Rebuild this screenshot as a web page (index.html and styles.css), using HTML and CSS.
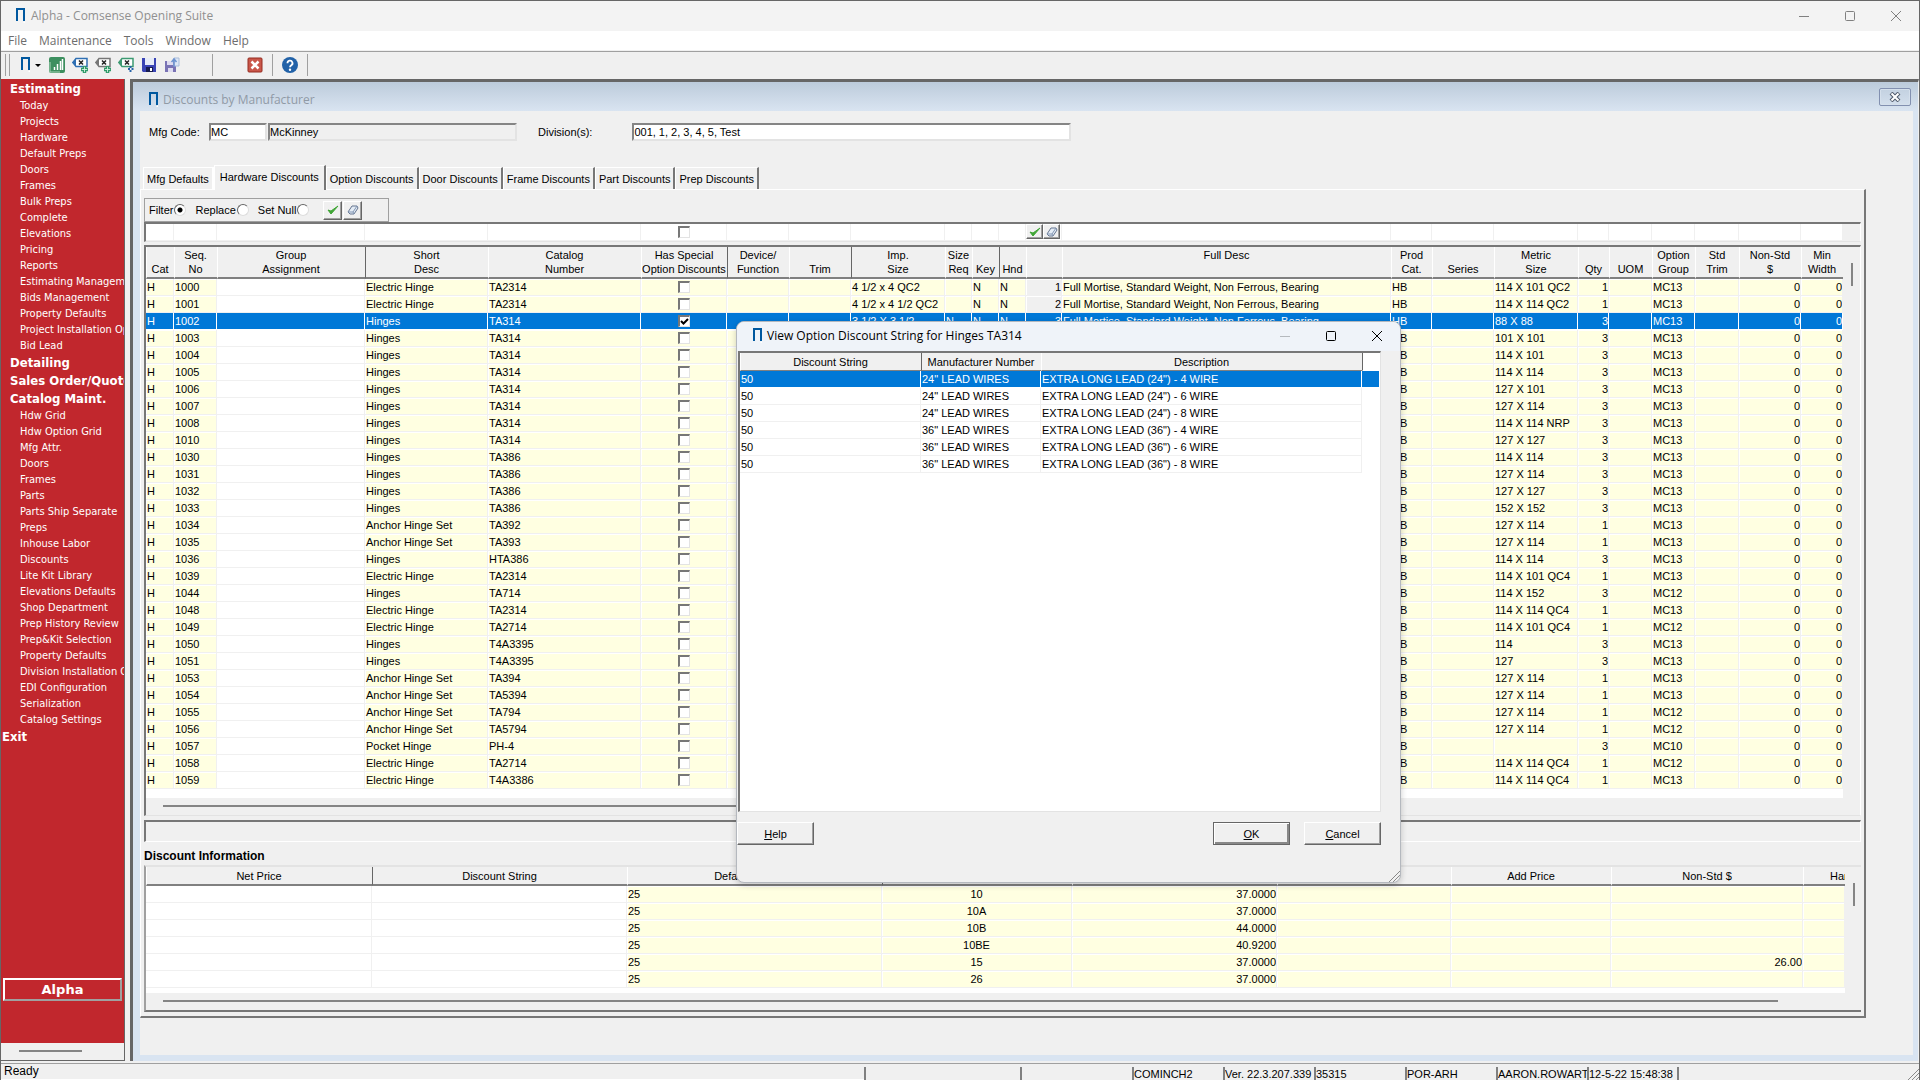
FILE: index.html
```html
<!DOCTYPE html>
<html lang="en">
<head>
<meta charset="utf-8">
<title>Alpha - Comsense Opening Suite</title>
<link rel="stylesheet" href="styles.css">
</head>
<body>
<svg class="defs" aria-hidden="true">
  <symbol id="door" viewBox="0 0 14 16"><path d="M0 15h9l2-2v2H2z" fill="#fff"/><path d="M3 13V1h7v12" fill="none" stroke="#00589f" stroke-width="2"/><path d="M2 0h9" stroke="#00589f" stroke-width="2"/></symbol>
  <symbol id="check" viewBox="0 0 12 12"><path d="M1 6l3 4 7-8-7 5z" fill="#3fa535" stroke="#3fa535"/></symbol>
  <symbol id="eraser" viewBox="0 0 12 12"><path d="M1 8l4-6h5l1 2-4 6H3z" fill="#e4ecf5" stroke="#64748f"/><path d="M1 8h5l4-6M6 8l1 2" fill="none" stroke="#8296b4"/></symbol>
  <symbol id="plus" viewBox="0 0 8 8"><path d="M4 0v8M0 4h8" stroke="#2f9a68" stroke-width="4"/><path d="M4 1v6M1 4h6" stroke="#d8f3e5" stroke-width="1"/></symbol>
  <symbol id="x" viewBox="0 0 12 12"><path d="M1 1l10 10M11 1L1 11" stroke="currentColor"/></symbol>
</svg>

<div class="app">
  <header class="titlebar">
    <svg class="door"><use href="#door"/></svg>
    <h1>Alpha - Comsense Opening Suite</h1>
    <div class="winctl">
      <button aria-label="Minimize"><svg width="12" height="12"><path d="M1 6.500h10" stroke="currentColor"/></svg></button>
      <button aria-label="Maximize"><svg width="12" height="12"><rect x="1.500" y="1.500" width="9" height="9" rx="1" fill="none" stroke="currentColor"/></svg></button>
      <button aria-label="Close"><svg width="12" height="12"><use href="#x"/></svg></button>
    </div>
  </header>
  <nav class="menubar"><a href="#">File</a><a href="#">Maintenance</a><a href="#">Tools</a><a href="#">Window</a><a href="#">Help</a></nav>
  <div class="toolbar">
    <span class="grip"></span>
    <button class="tool modules" aria-label="Modules"><svg class="door"><use href="#door"/></svg><i class="caret"></i></button>
    <button class="tool" aria-label="Reports"><svg viewBox="0 0 16 16"><rect width="16" height="16" rx="2" fill="#3d8f5f"/><path d="M1 5v10h10" fill="none" stroke="#a9d3b8"/><path d="M5.500 13v-3M8.500 13V7M11.500 13V4M13.500 13V2" stroke="#fff" stroke-width="1.500"/></svg></button>
    <button class="tool" aria-label="Add tag"><svg viewBox="0 0 16 16"><path d="M4 1.500h11v8H4l-3-4z" fill="#fff" stroke="#2f6fb3" stroke-width="1.500"/><path d="M0 5.500l4-4v8z" fill="#2f6fb3"/><path d="M7 3.500l4 4M11 3.500l-4 4" stroke="#222" stroke-width="1.500"/><use href="#plus" x="9" y="9" width="7" height="7"/></svg></button>
    <button class="tool" aria-label="Add item"><svg viewBox="0 0 16 16"><path d="M4 1.500h11v8H4l-3-4z" fill="#fff" stroke="#777" stroke-width="1.500"/><path d="M0 5.500l4-4v8z" fill="#777"/><path d="M7 3.500l4 4M11 3.500l-4 4" stroke="#222" stroke-width="1.500"/><use href="#plus" x="9" y="9" width="7" height="7"/></svg></button>
    <button class="tool" aria-label="Move tag"><svg viewBox="0 0 16 16"><path d="M4 1.500h11v8H4l-3-4z" fill="#fff" stroke="#3d9a72" stroke-width="1.500"/><path d="M0 5.500l4-4v8z" fill="#3d9a72"/><path d="M7 3.500l4 4M11 3.500l-4 4" stroke="#222" stroke-width="1.500"/><path d="M12.500 9v2M12.500 13v2M10 12h2M13.500 12h2" stroke="#2864a8" stroke-width="2"/></svg></button>
    <button class="tool" aria-label="Save"><svg viewBox="0 0 16 16"><path d="M1 1h14v14H2l-1-1z" fill="#3a44b4"/><path d="M4 1h9v7H4z" fill="#e6ebf8"/><path d="M5 10h7v5H5z" fill="#171c50"/><path d="M9 11h2v3H9z" fill="#fff"/></svg></button>
    <button class="tool" aria-label="Save and send"><svg viewBox="0 0 16 16"><path d="M1 4h11v11H1z" fill="#7a73b5"/><path d="M3 4h6v4H3zM4 11h5v4H4z" fill="#dedcf0"/><path d="M10 1h5v8h-5z" fill="#dce6f5" stroke="#a9bcda"/><path d="M10 10V3M7.500 5L10 2l2.500 3" fill="none" stroke="#6d93d0" stroke-width="1.500"/></svg></button>
    <span class="sep wide"></span>
    <button class="tool" aria-label="Close window"><svg viewBox="0 0 16 16"><rect x="1" y="1" width="14" height="14" rx="1" fill="#c9574a" stroke="#962c20"/><path d="M4.500 4.500l7 7M11.500 4.500l-7 7" stroke="#fff" stroke-width="2.500"/></svg></button>
    <span class="sep"></span>
    <button class="tool" aria-label="Help"><svg viewBox="0 0 16 16"><circle cx="8" cy="8" r="8" fill="#2262a8"/><path d="M5.500 6.300a2.500 2.500 0 1 1 3.800 2C8.300 9 8 9.300 8 10.300" fill="none" stroke="#fff" stroke-width="1.800"/><circle cx="8" cy="12.700" r="1.200" fill="#fff"/></svg></button>
    <span class="sep"></span>
  </div>

  <div class="workspace">
    <aside class="sidebar">
      <nav>
        <h2>Estimating</h2>
        <a href="#">Today</a><a href="#">Projects</a><a href="#">Hardware</a><a href="#">Default Preps</a><a href="#">Doors</a><a href="#">Frames</a><a href="#">Bulk Preps</a><a href="#">Complete</a><a href="#">Elevations</a><a href="#">Pricing</a><a href="#">Reports</a><a href="#">Estimating Management</a><a href="#">Bids Management</a><a href="#">Property Defaults</a><a href="#">Project Installation Options</a><a href="#">Bid Lead</a>
        <h2>Detailing</h2>
        <h2>Sales Order/Quote</h2>
        <h2>Catalog Maint.</h2>
        <a href="#">Hdw Grid</a><a href="#">Hdw Option Grid</a><a href="#">Mfg Attr.</a><a href="#">Doors</a><a href="#">Frames</a><a href="#">Parts</a><a href="#">Parts Ship Separate</a><a href="#">Preps</a><a href="#">Inhouse Labor</a><a href="#">Discounts</a><a href="#">Lite Kit Library</a><a href="#">Elevations Defaults</a><a href="#">Shop Department</a><a href="#">Prep History Review</a><a href="#">Prep&amp;Kit Selection</a><a href="#">Property Defaults</a><a href="#">Division Installation Options</a><a href="#">EDI Configuration</a><a href="#">Serialization</a><a href="#">Catalog Settings</a>
        <h2 class="exit">Exit</h2>
      </nav>
      <button class="company">Alpha</button>
      <div class="hscroll"><span></span></div>
    </aside>

    <main class="child">
      <div class="childbar">
        <svg class="door"><use href="#door"/></svg>
        <h2>Discounts by Manufacturer</h2>
        <button aria-label="Close"><svg width="12" height="10" viewBox="0 0 12 10"><path d="M2 1l8 8M10 1L2 9" stroke="#4f5a6b" stroke-width="4"/><path d="M2.500 1.500l7 7M9.500 1.500l-7 7" stroke="#fff" stroke-width="2"/></svg></button>
      </div>
      <div class="content">
        <form class="fields">
          <label for="mfg">Mfg Code:</label>
          <input id="mfg" class="mfg" value="MC">
          <input class="mfgname" aria-label="Manufacturer name" value="McKinney" readonly>
          <label for="div">Division(s):</label>
          <input id="div" class="division" value="001, 1, 2, 3, 4, 5, Test">
        </form>
        <div class="tabs">
          <button>Mfg Defaults</button><button class="active">Hardware Discounts</button><button>Option Discounts</button><button>Door Discounts</button><button>Frame Discounts</button><button>Part Discounts</button><button>Prep Discounts</button>
        </div>
        <section class="panel">
          <div class="mode">
            <label>Filter<input type="radio" name="mode" checked></label>
            <label>Replace<input type="radio" name="mode"></label>
            <label>Set Null<input type="radio" name="mode"></label>
            <button aria-label="Apply"><svg><use href="#check"/></svg></button>
            <button aria-label="Clear"><svg><use href="#eraser"/></svg></button>
          </div>
          <div class="filterrow"><table class="grid main" id="filter"></table></div>
          <div class="gridbox">
            <div class="gridbody">
              <table class="grid main" id="hardware">
                <thead><tr>
                  <th>Cat</th><th>Seq.<br>No</th><th>Group<br>Assignment</th><th class="dark">Short<br>Desc</th><th>Catalog<br>Number</th><th>Has Special<br>Option Discounts</th><th class="dark">Device/<br>Function</th><th>Trim</th><th class="dark">Imp.<br>Size</th><th>Size<br>Req</th><th>Key</th><th class="dark">Hnd</th><th></th><th class="top">Full Desc</th><th>Prod<br>Cat.</th><th>Series</th><th>Metric<br>Size</th><th>Qty</th><th>UOM</th><th>Option<br>Group</th><th>Std<br>Trim</th><th>Non-Std<br>$</th><th>Min<br>Width</th>
                </tr></thead>
              </table>
              <div class="vscroll"><span></span></div>
            </div>
            <div class="hscroll short"><span></span></div>
          </div>
          <div class="message"></div>
          <h3>Discount Information</h3>
          <div class="gridbox info">
            <div class="gridbody">
              <table class="grid" id="discounts">
                <colgroup><col style="width:226px"><col style="width:255px"><col style="width:255px"><col style="width:190px"><col style="width:205px"><col><col style="width:160px"><col style="width:192px"><col style="width:42px"></colgroup>
                <thead><tr><th>Net Price</th><th class="dark">Discount String</th><th>Default Discount</th><th class="dark"></th><th></th><th></th><th>Add Price</th><th>Non-Std $</th><th class="cut">Hardware</th></tr></thead>
              </table>
              <div class="vscroll"><span></span></div>
            </div>
            <div class="hscroll"><span></span></div>
          </div>
        </section>
      </div>
    </main>
  </div>

  <footer class="status">
    <span class="ready">Ready</span>
    <span class="cell w1"></span><span class="cell w2"></span><span class="cell">COMINCH2</span><span class="cell">Ver. 22.3.207.339</span><span class="cell">35315</span><span class="cell">POR-ARH</span><span class="cell">AARON.ROWART</span><span class="cell last">12-5-22 15:48:38</span>
    <svg class="sizegrip" viewBox="0 0 12 12"><path d="M1 12L12 1M5 12l7-7M9 12l3-3" stroke="#888"/></svg>
  </footer>

  <div class="dialog" role="dialog" aria-labelledby="dlgtitle">
    <div class="dlgbar">
      <svg class="door"><use href="#door"/></svg>
      <h2 id="dlgtitle">View Option Discount String for Hinges TA314</h2>
      <div class="winctl">
        <button aria-label="Minimize" disabled><svg width="12" height="12"><path d="M1 6.500h10" stroke="currentColor"/></svg></button>
        <button aria-label="Maximize"><svg width="12" height="12"><rect x="1.500" y="1.500" width="9" height="9" rx="1" fill="none" stroke="currentColor"/></svg></button>
        <button aria-label="Close"><svg width="12" height="12"><use href="#x"/></svg></button>
      </div>
    </div>
    <div class="dlggrid">
      <table class="grid plain">
        <colgroup><col style="width:181px"><col style="width:120px"><col><col style="width:18px"></colgroup>
        <thead><tr><th>Discount String</th><th class="dark">Manufacturer Number</th><th>Description</th><th class="dark blank"></th></tr></thead>
        <tbody>
          <tr class="sel"><td>50</td><td>24" LEAD WIRES</td><td>EXTRA LONG LEAD (24") - 4 WIRE</td><td></td></tr>
          <tr><td>50</td><td>24" LEAD WIRES</td><td>EXTRA LONG LEAD (24") - 6 WIRE</td><td></td></tr>
          <tr><td>50</td><td>24" LEAD WIRES</td><td>EXTRA LONG LEAD (24") - 8 WIRE</td><td></td></tr>
          <tr><td>50</td><td>36" LEAD WIRES</td><td>EXTRA LONG LEAD (36") - 4 WIRE</td><td></td></tr>
          <tr><td>50</td><td>36" LEAD WIRES</td><td>EXTRA LONG LEAD (36") - 6 WIRE</td><td></td></tr>
          <tr><td>50</td><td>36" LEAD WIRES</td><td>EXTRA LONG LEAD (36") - 8 WIRE</td><td></td></tr>
        </tbody>
      </table>
    </div>
    <div class="dlgbuttons">
      <button><u>H</u>elp</button><button class="default"><u>O</u>K</button><button><u>C</u>ancel</button>
    </div>
    <svg class="sizegrip" viewBox="0 0 12 12"><path d="M1 12L12 1M5 12l7-7M9 12l3-3" stroke="#888"/></svg>
  </div>
</div>
<script src="app.js"></script>
</body>
</html>
```
FILE: styles.css
```css
* { box-sizing: border-box; }
body { margin: 0; background: #f0f0f0; color: #000; font: 11px/14px "Liberation Sans", Arial, sans-serif; }
h1, h2, h3 { margin: 0; font-size: inherit; font-weight: normal; }
button { margin: 0; padding: 0; border: 0; background: none; font: inherit; color: inherit; }
a { color: inherit; text-decoration: none; }
input { font: inherit; color: inherit; margin: 0; border-radius: 0; }
.defs { display: none; }
.door { width: 14px; height: 16px; flex: none; }

.app { position: relative; display: flex; flex-direction: column; min-height: 100vh; border: 1px solid #666; border-bottom: 0; overflow: hidden; }

/* Frame, menu and toolbar */
.titlebar { display: flex; align-items: center; height: 30px; padding-left: 13px; gap: 3px; background: #f3f3f3; color: #909090; font: 12px/16px "Open Sans", sans-serif; }
.winctl { display: flex; gap: 34px; margin-left: auto; padding-right: 17px; }
.winctl button { display: flex; width: 12px; }
.titlebar .winctl { color: #808080; }
.menubar { display: flex; gap: 12px; height: 20px; padding-left: 7px; background: #fff; border-bottom: 1px solid #f0f0f0; color: #6d6d6d; font: 12px/19px "Open Sans", sans-serif; }
.toolbar { display: flex; align-items: center; height: 28px; padding: 0 0 1px 4px; border-top: 1px solid #a0a0a0; }
.grip { width: 5px; height: 22px; border: solid #a0a0a0; border-width: 0 1px 0 1px; margin-right: 9px; }
.tool { display: flex; width: 16px; height: 16px; margin-right: 7px; }
.tool svg { width: 16px; height: 16px; }
.modules { width: 23px; align-items: center; gap: 2px; }
.modules .door { width: 14px; }
.caret { border: solid transparent; border-width: 3px 3px 0; border-top-color: #000; }
.sep { width: 1px; height: 22px; margin: 0 9px 0 2px; background: #a0a0a0; }
.sep.wide { margin: 0 34px 0 25px; }

/* Navigation column */
.workspace { flex: 1; display: flex; gap: 5px; }
.sidebar { display: flex; flex-direction: column; flex: none; width: 124px; padding: 1px 0 0 1px; background: #c1272d; border-right: 1px solid #666; border-bottom: 1px solid #666; color: #fff; font: 11px/16px "DejaVu Sans Condensed", Tahoma, sans-serif; overflow: hidden; }
.sidebar nav { display: flex; flex-direction: column; white-space: nowrap; }
.sidebar nav a { padding-left: 18px; }
.sidebar nav h2 { padding-left: 8px; font-size: 13px; font-weight: bold; line-height: 18px; }
.sidebar nav .exit { padding-left: 0; }
.company { height: 23px; margin: auto 2px 42px 1px; border: 2px solid; border-color: #fff #a0a0a0 #a0a0a0 #fff; font: bold 13px/18px "DejaVu Sans", Verdana, sans-serif; }
.hscroll { height: 17px; padding-top: 7px; background: #f0f0f0; }
.hscroll span { display: block; height: 2px; background: #858585; }
.sidebar .hscroll { margin-left: -1px; }
.sidebar .hscroll span { width: 63px; margin-left: 18px; }

/* Child window */
.child { flex: 1; display: flex; flex-direction: column; min-width: 0; padding: 0 5px 6px 7px; border: solid #666; border-width: 3px 1px 0 3px; border-right-color: #f0f0f0; background: #d9e4f1; }
.childbar { display: flex; align-items: center; gap: 2px; height: 29px; margin: 0 -5px 0 -7px; padding: 6px 7px 0 14px; background: linear-gradient(#bccbdb, #d9e4f1); color: #909aa6; font: 12px/16px "Open Sans", sans-serif; }
.childbar button { display: grid; place-items: center; align-self: flex-start; width: 32px; height: 18px; margin-left: auto; border: 1px solid #8290b0; border-radius: 2px; box-shadow: inset 0 0 0 1px #d5e0ec; }
.content { flex: 1; padding: 12px 47px 30px 0; background: #f0f0f0; }
.fields { display: flex; align-items: center; height: 18px; padding-left: 9px; }
.fields input { height: 18px; padding: 0; border: 2px solid; border-color: #858585 #e3e3e3 #e3e3e3 #858585; background: #fff; }
.fields label:first-child { width: 60px; }
.fields .mfg { width: 58px; margin-right: 1px; }
.fields .mfgname { width: 249px; margin-right: 21px; background: #f0f0f0; }
.fields .division { width: 439px; margin-left: 40px; }
.tabs { display: flex; align-items: flex-end; height: 24px; margin: 24px 0 0 3px; }
.tabs button { height: 22px; padding: 0 3px; border: solid; border-width: 1px 2px 0 1px; border-color: #fff #777 #fff #fff; white-space: nowrap; }
.tabs button:first-child { border-right-color: #fff; }
.tabs .active { position: relative; height: 25px; padding: 0 5px 3px; margin-bottom: -1px; background: #f0f0f0; }
.panel { padding: 8px 3px 4px 3px; border: solid; border-width: 1px 2px 2px 1px; border-color: #fff #777 #777 #fff; }
.mode { display: flex; align-items: center; width: 245px; height: 24px; padding-left: 4px; border: 1px solid #a0a0a0; }
.mode label { display: flex; align-items: center; gap: 1px; margin-right: 9px; white-space: nowrap; }
.mode input { appearance: none; width: 12px; height: 12px; border: 1px solid; border-color: #666 #ddd #ddd #666; border-radius: 50%; background: #fff; }
.mode input:checked { background: radial-gradient(circle, #000 2px, #fff 3px); }
.mode label:nth-child(3) { margin-right: 14px; }
.mode button, .cellbtn { display: grid; place-items: center; width: 19px; height: 19px; margin-right: 1px; border: 1px solid; border-color: #fff #666 #666 #fff; box-shadow: inset -1px -1px #a0a0a0; background: #f0f0f0; }
.mode svg, .cellbtn svg { width: 12px; height: 12px; }
.filterrow { padding-right: 17px; border: solid; border-width: 2px 1px 1px 2px; border-color: #777 #fff #e3e3e3 #777; }

/* Data grids */
.grid { width: 100%; table-layout: fixed; border-collapse: separate; border-spacing: 0; background: #fff; }
.grid th { height: 17px; padding: 0 1px 0 0; border-bottom: 2px solid #808080; border-left: 1px solid #fff; background: #f0f0f0; font-weight: normal; vertical-align: bottom; white-space: nowrap; line-height: 14px; overflow: hidden; }
.grid th.dark { border-left-color: #666; }
.grid th.top { vertical-align: top; padding-top: 1px; }
.grid th.cut { padding-left: 26px; text-align: left; }
.grid td { height: 17px; padding: 0 1px; border: solid #f0f0f0; border-width: 0 1px 1px 0; background: #ffffe1; box-shadow: inset 1px 1px #fff; line-height: 16px; white-space: nowrap; overflow: hidden; }
.grid td.w, .plain td, #filter td { background: #fff; }
.grid td.n { background: #f0f0f0; text-align: right; padding: 0; }
.grid td.r { text-align: right; padding: 0; }
.grid td.c { text-align: center; }
.grid .sel td { background: #0078d7; color: #fff; box-shadow: none; border-bottom-color: #fff; border-right-color: #fff; }
.main td { padding: 0 1px; }
#hardware th { height: 32px; padding-bottom: 1px; }
#hardware tbody td { line-height: 15px; }
#filter td { padding: 0; }
.cellbtn { display: inline-grid; width: 17px; height: 15px; margin: 0; vertical-align: top; }
td input[type=checkbox] { appearance: none; display: block; width: 12px; height: 12px; margin: 0 auto; border: solid; border-width: 2px 1px 1px 2px; border-color: #777 #e3e3e3 #e3e3e3 #777; background: #fff; }
td input[type=checkbox]:checked { background: #fff url("data:image/svg+xml,%3Csvg xmlns='http://www.w3.org/2000/svg' viewBox='0 0 9 9'%3E%3Cpath d='M1 4l2.500 2.500L8 2' fill='none' stroke='%23000' stroke-width='2'/%3E%3C/svg%3E"); }
.gridbox { margin-top: 3px; border: solid; border-width: 2px 1px 1px 2px; border-color: #777 #fff #e3e3e3 #777; }
.gridbody { display: flex; align-items: flex-start; padding-bottom: 9px; background: linear-gradient(to left, #f0f0f0 17px, #fff 17px); }
.vscroll { flex: none; align-self: stretch; width: 17px; padding: 16px 7px 0 8px; }
.vscroll span { display: block; width: 2px; height: 23px; background: #858585; }
.gridbox > .hscroll span { margin: 0 83px 0 17px; }
.gridbox > .short span { margin-right: 600px; }
.message { height: 22px; margin-top: 4px; border: solid; border-width: 2px 1px 1px 2px; border-color: #777 #fff #fff #777; }
.panel h3 { padding: 7px 0 1px; font-size: 12px; line-height: 15px; font-weight: bold; }
.info { margin: 0; border-width: 2px 0 2px 2px; border-color: #e3e3e3 #fff #777 #a0a0a0; }
.info th { height: 19px; padding-bottom: 1px; }
.info .gridbody { padding-bottom: 5px; background: linear-gradient(to left, #f0f0f0 16px, #fff 16px); }
.info .vscroll { width: 16px; padding-right: 6px; }

/* Status bar */
.status { display: flex; align-items: flex-end; height: 17px; margin-top: 2px; padding-right: 2px; border-top: 1px solid #a0a0a0; white-space: nowrap; }
.status .ready { flex: 1; align-self: flex-start; padding-left: 3px; font-size: 12px; line-height: 15px; border-bottom: 1px solid #fff; }
.status .cell { flex: none; width: 91px; height: 13px; border-left: 2px solid #808080; overflow: hidden; line-height: 15px; }
.status .w1 { width: 156px; }
.status .w2 { width: 112px; }
.status .last { width: 92px; border-right: 2px solid #808080; margin-right: 238px; }
.sizegrip { position: absolute; right: 0; bottom: 0; width: 12px; height: 12px; }

/* Dialog window */
.dialog { position: absolute; left: 735px; top: 320px; width: 665px; border: 1px solid #b4b8be; border-radius: 8px; background: #f0f0f0; overflow: hidden; box-shadow: 0 2px 6px rgba(0, 0, 0, .2); }
.dlgbar { display: flex; align-items: center; gap: 2px; height: 29px; padding: 0 0 2px 14px; background: #eff3f9; font: 12px/16px "Open Sans", sans-serif; }
.dlgbar button:disabled { color: #b5b9be; }
.dlggrid { height: 461px; margin: 0 19px 0 1px; border: solid; border-width: 2px 1px 1px 2px; border-color: #777 #e3e3e3 #e3e3e3 #777; background: #fff; }
.dlggrid th { height: 18px; padding-bottom: 1px; border-bottom-width: 1px; }
.dlggrid .blank { background: #fff; border-bottom-color: #fff; }
.dlggrid tr:not(.sel) td:last-child { border-color: #fff; }
.dlgbuttons { display: flex; padding: 10px 19px 37px 0; }
.dlgbuttons button { width: 77px; height: 23px; margin-left: 14px; border: 1px solid; border-color: #fff #666 #666 #fff; box-shadow: inset -1px -1px #a0a0a0; }
.dlgbuttons button:first-child { margin: 0 auto 0 0; }
.dlgbuttons .default { border-color: #666; box-shadow: inset 1px 1px #fff, inset -2px -2px #888; }
```
FILE: app.js
```js
var widths = [28, 43, 148, 123, 153, 86, 62, 62, 94, 27, 27, 27, 36, 0, 41, 62, 84, 31, 43, 43, 44, 62, 42];
var desc = 'Full Mortise, Standard Weight, Non Ferrous, Bearing';

// seq | short desc | catalog number | metric size | qty | option group
var items = [
  '1000|Electric Hinge|TA2314|114 X 101 QC2|1|MC13',
  '1001|Electric Hinge|TA2314|114 X 114 QC2|1|MC13',
  '1002|Hinges|TA314|88 X 88|3|MC13',
  '1003|Hinges|TA314|101 X 101|3|MC13',
  '1004|Hinges|TA314|114 X 101|3|MC13',
  '1005|Hinges|TA314|114 X 114|3|MC13',
  '1006|Hinges|TA314|127 X 101|3|MC13',
  '1007|Hinges|TA314|127 X 114|3|MC13',
  '1008|Hinges|TA314|114 X 114 NRP|3|MC13',
  '1010|Hinges|TA314|127 X 127|3|MC13',
  '1030|Hinges|TA386|114 X 114|3|MC13',
  '1031|Hinges|TA386|127 X 114|3|MC13',
  '1032|Hinges|TA386|127 X 127|3|MC13',
  '1033|Hinges|TA386|152 X 152|3|MC13',
  '1034|Anchor Hinge Set|TA392|127 X 114|1|MC13',
  '1035|Anchor Hinge Set|TA393|127 X 114|1|MC13',
  '1036|Hinges|HTA386|114 X 114|3|MC13',
  '1039|Electric Hinge|TA2314|114 X 101 QC4|1|MC13',
  '1044|Hinges|TA714|114 X 152|3|MC12',
  '1048|Electric Hinge|TA2314|114 X 114 QC4|1|MC13',
  '1049|Electric Hinge|TA2714|114 X 101 QC4|1|MC12',
  '1050|Hinges|T4A3395|114|3|MC13',
  '1051|Hinges|T4A3395|127|3|MC13',
  '1053|Anchor Hinge Set|TA394|127 X 114|1|MC13',
  '1054|Anchor Hinge Set|TA5394|127 X 114|1|MC13',
  '1055|Anchor Hinge Set|TA794|127 X 114|1|MC12',
  '1056|Anchor Hinge Set|TA5794|127 X 114|1|MC12',
  '1057|Pocket Hinge|PH-4||3|MC10',
  '1058|Electric Hinge|TA2714|114 X 114 QC4|1|MC12',
  '1059|Electric Hinge|T4A3386|114 X 114 QC4|1|MC13'
];
var impSizes = ['4 1/2 x 4 QC2', '4 1/2 x 4 1/2 QC2', '3 1/2 X 3 1/2'];

// finish | price | non-standard amount
var finishes = ['10|37.0000|', '10A|37.0000|', '10B|44.0000|', '10BE|40.9200|', '15|37.0000|26.00', '26|37.0000|'];

function td(text, cls) {
  return '<td' + (cls ? ' class="' + cls + '"' : '') + '>' + text + '</td>';
}
function checkbox(label, on) {
  return '<input type="checkbox" aria-label="' + label + '"' + (on ? ' checked' : '') + '>';
}

var cols = '<colgroup>' + widths.map(function (w) {
  return w ? '<col style="width:' + w + 'px">' : '<col>';
}).join('') + '</colgroup>';

document.getElementById('filter').innerHTML = cols + '<tbody><tr>' + widths.map(function (w, i) {
  if (i === 5) return td(checkbox('Filter special discounts'));
  if (i === 12) return td('<button class="cellbtn" aria-label="Apply"><svg><use href="#check"/></svg></button><button class="cellbtn" aria-label="Clear"><svg><use href="#eraser"/></svg></button>');
  return td('');
}).join('') + '</tr></tbody>';

var hardware = document.getElementById('hardware');
hardware.insertAdjacentHTML('afterbegin', cols);
hardware.insertAdjacentHTML('beforeend', '<tbody>' + items.map(function (line, i) {
  var f = line.split('|');
  return '<tr' + (i === 2 ? ' class="sel"' : '') + '>' +
    td('H') + td(f[0]) + td('', 'w') + td(f[1]) + td(f[2]) + td(checkbox('Has special option discounts', i === 2)) +
    td('') + td('') + td(impSizes[i] || '') + td(i === 2 ? 'N' : '') + td('N') + td('N') +
    td(i + 1, 'n') + td(desc) + td('HB') + td('') + td(f[3]) + td(f[4], 'r') + td('') + td(f[5]) +
    td('') + td('0', 'r') + td('0', 'r') + '</tr>';
}).join('') + '</tbody>');

document.getElementById('discounts').insertAdjacentHTML('beforeend', '<tbody>' + finishes.map(function (line) {
  var f = line.split('|');
  return '<tr>' + td('', 'w') + td('', 'w') + td('25') + td(f[0], 'c') + td(f[1], 'r') + td('') + td('') + td(f[2], 'r') + td('') + '</tr>';
}).join('') + '</tbody>');
```
